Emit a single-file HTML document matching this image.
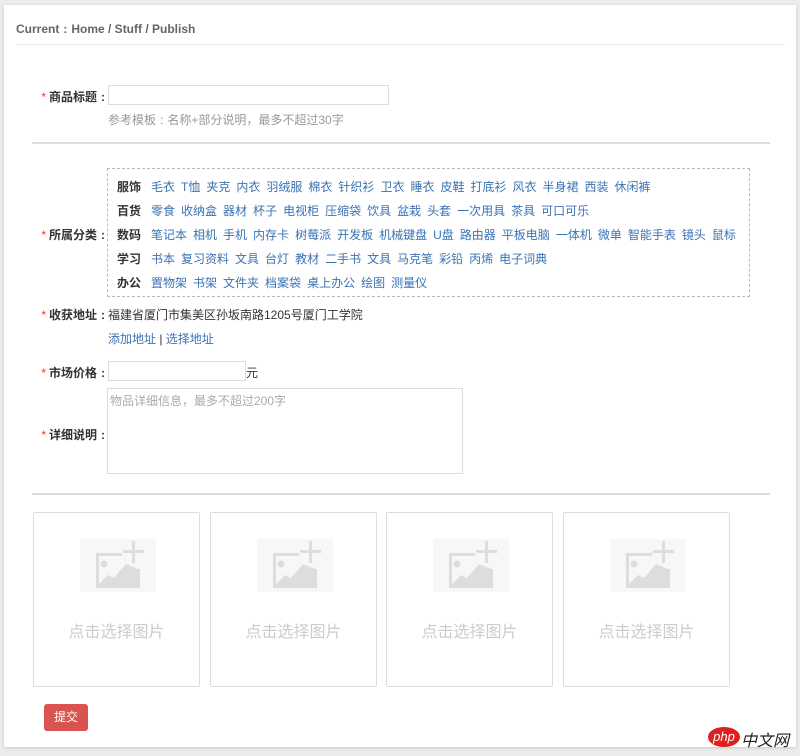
<!DOCTYPE html>
<html><head><meta charset="utf-8"><style>
*{margin:0;padding:0;box-sizing:border-box}
body{width:800px;height:756px;background:#ececec;font-family:"Liberation Sans","Noto Sans CJK SC",sans-serif;font-size:12px;color:#333;position:relative;overflow:hidden}
.panel{position:absolute;left:4px;top:5px;width:792px;height:742px;background:#fff;box-shadow:0 1px 3px rgba(0,0,0,.15)}
.a{position:absolute;white-space:nowrap}
.c{display:inline-block;margin:0 2px 0 4px}
.lbl{font-weight:bold;color:#333;left:20px;width:87px;text-align:right}
.lbl i{color:#e33;font-style:normal;font-weight:normal;margin-right:3px}
.inp{position:absolute;border:1px solid #ddd;background:#fff}
.hr{position:absolute;height:2px;background:#ddd}
.cat{position:absolute;left:107px;top:168px;width:643px;height:129px;border:1px dashed #bbb}
.row{position:absolute;left:9px;white-space:nowrap}
.row b{display:inline-block;width:34px;color:#333}
.row span{color:#3a73b5;margin-right:6px}
.card{position:absolute;top:512px;width:167px;height:175px;border:1px solid #ddd;border-radius:2px;background:#fff}
.card .ib{position:absolute;left:46px;top:26px;width:76px;height:53px;background:#f7f7f7}
.card .t{position:absolute;left:0;right:0;top:105px;text-align:center;font-size:16px;color:#ccc}
.btn{position:absolute;left:44px;top:704px;width:44px;height:27px;background:#d9534f;border-radius:3px;color:#fff;font-size:12px;text-align:center;line-height:27px}
</style></head><body>
<div class="panel"></div>
<div class="a" style="left:16px;top:22px;font-size:12px;font-weight:bold;color:#666">Current<span class="c" style="margin:0 4px">:</span>Home / Stuff / Publish</div>
<div style="position:absolute;left:16px;top:44px;width:769px;height:1px;background:#e8e8e8"></div>

<div class="a lbl" style="top:88px"><i>*</i>商品标题<span class="c">:</span></div>
<div class="inp" style="left:108px;top:85px;width:281px;height:20px"></div>
<div class="a" style="left:108px;top:111px;color:#999">参考模板<span class="c" style="margin:0 4px">:</span>名称+部分说明，最多不超过30字</div>
<div class="hr" style="left:32px;top:142px;width:738px"></div>

<div class="a lbl" style="top:226px"><i>*</i>所属分类<span class="c">:</span></div>
<div class="cat">
<div class="row" style="top:9px"><b>服饰</b><span>毛衣</span><span>T恤</span><span>夹克</span><span>内衣</span><span>羽绒服</span><span>棉衣</span><span>针织衫</span><span>卫衣</span><span>睡衣</span><span>皮鞋</span><span>打底衫</span><span>风衣</span><span>半身裙</span><span>西装</span><span>休闲裤</span></div>
<div class="row" style="top:33px"><b>百货</b><span>零食</span><span>收纳盒</span><span>器材</span><span>杯子</span><span>电视柜</span><span>压缩袋</span><span>饮具</span><span>盆栽</span><span>头套</span><span>一次用具</span><span>茶具</span><span>可口可乐</span></div>
<div class="row" style="top:57px"><b>数码</b><span>笔记本</span><span>相机</span><span>手机</span><span>内存卡</span><span>树莓派</span><span>开发板</span><span>机械键盘</span><span>U盘</span><span>路由器</span><span>平板电脑</span><span>一体机</span><span>微单</span><span>智能手表</span><span>镜头</span><span>鼠标</span></div>
<div class="row" style="top:81px"><b>学习</b><span>书本</span><span>复习资料</span><span>文具</span><span>台灯</span><span>教材</span><span>二手书</span><span>文具</span><span>马克笔</span><span>彩铅</span><span>丙烯</span><span>电子词典</span></div>
<div class="row" style="top:105px"><b>办公</b><span>置物架</span><span>书架</span><span>文件夹</span><span>档案袋</span><span>桌上办公</span><span>绘图</span><span>测量仪</span></div>
</div>

<div class="a lbl" style="top:306px"><i>*</i>收获地址<span class="c">:</span></div>
<div class="a" style="left:108px;top:306px;color:#333">福建省厦门市集美区孙坂南路1205号厦门工学院</div>
<div class="a" style="left:108px;top:330px;color:#3a73b5">添加地址 <span style="color:#333">|</span> 选择地址</div>

<div class="a lbl" style="top:364px"><i>*</i>市场价格<span class="c">:</span></div>
<div class="inp" style="left:108px;top:361px;width:138px;height:20px"></div>
<div class="a" style="left:246px;top:364px">元</div>

<div class="a lbl" style="top:426px"><i>*</i>详细说明<span class="c">:</span></div>
<div class="inp" style="left:107px;top:388px;width:356px;height:86px"><div class="a" style="left:2px;top:3px;color:#aaa">物品详细信息，最多不超过200字</div></div>
<div class="hr" style="left:32px;top:493px;width:738px"></div>

<div class="card" style="left:33px"><div class="ib"><svg width="76" height="53" viewBox="0 0 76 53"><g fill="#ddd"><path d="M16 14h26v3H19v29h38V30h3v19H16z"/><rect x="52" y="2" width="3" height="22"/><rect x="43" y="11" width="21" height="3"/><circle cx="24" cy="25" r="3.5"/><path d="M18 46l10-10 6 3 12-14 12 5v16z"/></g></svg></div><div class="t">点击选择图片</div></div>
<div class="card" style="left:210px"><div class="ib"><svg width="76" height="53" viewBox="0 0 76 53"><g fill="#ddd"><path d="M16 14h26v3H19v29h38V30h3v19H16z"/><rect x="52" y="2" width="3" height="22"/><rect x="43" y="11" width="21" height="3"/><circle cx="24" cy="25" r="3.5"/><path d="M18 46l10-10 6 3 12-14 12 5v16z"/></g></svg></div><div class="t">点击选择图片</div></div>
<div class="card" style="left:386px"><div class="ib"><svg width="76" height="53" viewBox="0 0 76 53"><g fill="#ddd"><path d="M16 14h26v3H19v29h38V30h3v19H16z"/><rect x="52" y="2" width="3" height="22"/><rect x="43" y="11" width="21" height="3"/><circle cx="24" cy="25" r="3.5"/><path d="M18 46l10-10 6 3 12-14 12 5v16z"/></g></svg></div><div class="t">点击选择图片</div></div>
<div class="card" style="left:563px"><div class="ib"><svg width="76" height="53" viewBox="0 0 76 53"><g fill="#ddd"><path d="M16 14h26v3H19v29h38V30h3v19H16z"/><rect x="52" y="2" width="3" height="22"/><rect x="43" y="11" width="21" height="3"/><circle cx="24" cy="25" r="3.5"/><path d="M18 46l10-10 6 3 12-14 12 5v16z"/></g></svg></div><div class="t">点击选择图片</div></div>

<div class="btn">提交</div>

<div style="position:absolute;left:708px;top:727px;width:32px;height:20px;border-radius:50%;background:#e02020;color:#fff;font-style:italic;font-size:13px;line-height:19px;text-align:center">php</div>
<div class="a" style="left:741px;top:727px;font-size:16px;color:#222;font-style:italic">中文网</div>
</body></html>
